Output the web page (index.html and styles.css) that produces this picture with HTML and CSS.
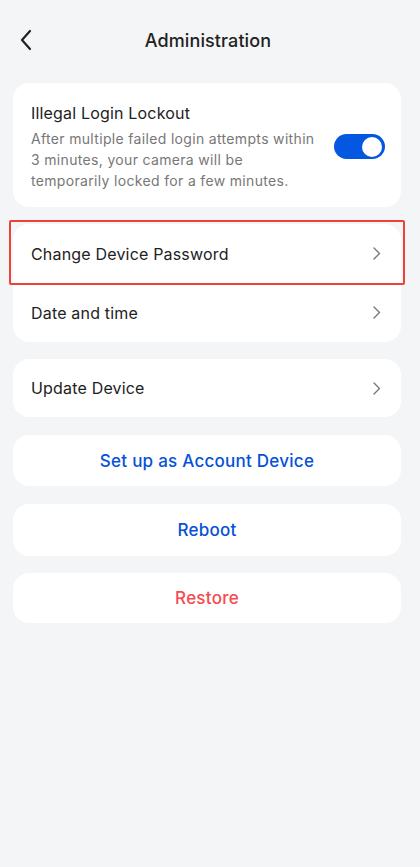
FILE: index.html
```html
<!DOCTYPE html>
<html>
<head>
<meta charset="utf-8">
<link rel="stylesheet" href="styles.css">
</head>
<body>
<div class="page">
  <header class="header">
    <span class="back">
      <svg width="14" height="22" viewBox="0 0 14 22"><path d="M11 2 L3 11 L11 20" fill="none" stroke="#222" stroke-width="2.2" stroke-linecap="round" stroke-linejoin="round"/></svg>
    </span>
    <h1 class="title">Administration</h1>
  </header>

  <section class="card lockout">
    <div class="lockout-text">
      <div class="row-title">Illegal Login Lockout</div>
      <div class="desc">After multiple failed login attempts within<br>3 minutes, your camera will be<br>temporarily locked for a few minutes.</div>
    </div>
    <div class="toggle"><span class="knob"></span></div>
  </section>

  <section class="card">
    <div class="row highlighted">
      <span class="row-title">Change Device Password</span>
      <svg class="chev" width="9" height="15" viewBox="0 0 9 15"><path d="M2 2 L7.5 7.5 L2 13" fill="none" stroke="#777" stroke-width="1.4" stroke-linecap="round" stroke-linejoin="round"/></svg>
      <span class="mark"></span>
    </div>
    <div class="row">
      <span class="row-title">Date and time</span>
      <svg class="chev" width="9" height="15" viewBox="0 0 9 15"><path d="M2 2 L7.5 7.5 L2 13" fill="none" stroke="#777" stroke-width="1.4" stroke-linecap="round" stroke-linejoin="round"/></svg>
    </div>
  </section>

  <section class="card">
    <div class="row short">
      <span class="row-title">Update Device</span>
      <svg class="chev" width="9" height="15" viewBox="0 0 9 15"><path d="M2 2 L7.5 7.5 L2 13" fill="none" stroke="#777" stroke-width="1.4" stroke-linecap="round" stroke-linejoin="round"/></svg>
    </div>
  </section>

  <section class="card button blue setup">Set up as Account Device</section>
  <section class="card button blue reboot">Reboot</section>
  <section class="card button red restore">Restore</section>
</div>
</body>
</html>
```

FILE: styles.css
```css
* { box-sizing: border-box; }
html, body { margin: 0; padding: 0; }
body {
  background: #f4f5f7;
  font-family: Inter, "Noto Sans", sans-serif;
  color: #222;
  width: 420px;
  height: 867px;
}
.page {
  padding: 0 19px 0 13px;
  display: flex;
  flex-direction: column;
  gap: 17px;
}
.header {
  height: 80px;
  margin-bottom: -14px;
  display: flex;
  align-items: center;
  justify-content: center;
  position: relative;
}
.back {
  position: absolute;
  left: 6px;
  top: 29px;
  display: flex;
}
.title {
  margin: 0;
  font-size: 18px;
  font-weight: 500;
  color: #222;
  letter-spacing: 0.1px;
  padding-left: 2px;
}
.card {
  background: #fff;
  border-radius: 16px;
}
.lockout {
  display: flex;
  align-items: center;
  padding: 19px 16px 16px 18px;
  gap: 10px;
}
.lockout-text { flex: 1; }
.row-title {
  font-size: 16px;
  line-height: 22px;
  color: #222;
  letter-spacing: 0.18px;
}
.desc {
  margin-top: 4px;
  font-size: 14px;
  line-height: 21px;
  color: #777;
  letter-spacing: 0.33px;
  white-space: nowrap;
}
.toggle {
  width: 51px;
  height: 25px;
  border-radius: 13px;
  background: #0457e0;
  position: relative;
  flex: none;
}
.knob {
  position: absolute;
  right: 3px;
  top: 2.5px;
  width: 20px;
  height: 20px;
  border-radius: 50%;
  background: #fff;
}
.row {
  height: 59px;
  display: flex;
  align-items: center;
  justify-content: space-between;
  padding: 0 20px 0 18px;
  position: relative;
}
.row.short { height: 58px; }
.chev { flex: none; }
.mark {
  position: absolute;
  left: -4px;
  right: -4px;
  top: -4px;
  bottom: -2px;
  border: 2px solid #ee4137;
  border-radius: 2px;
}
.button {
  display: flex;
  align-items: center;
  justify-content: center;
  font-size: 17px;
  font-weight: 500;
  letter-spacing: 0.25px;
}
.setup { height: 51px; margin-top: 1px; }
.reboot { height: 52px; margin-top: 1px; }
.restore { height: 50px; }
.blue { color: #0552d9; }
.red { color: #f54a4f; }
```
